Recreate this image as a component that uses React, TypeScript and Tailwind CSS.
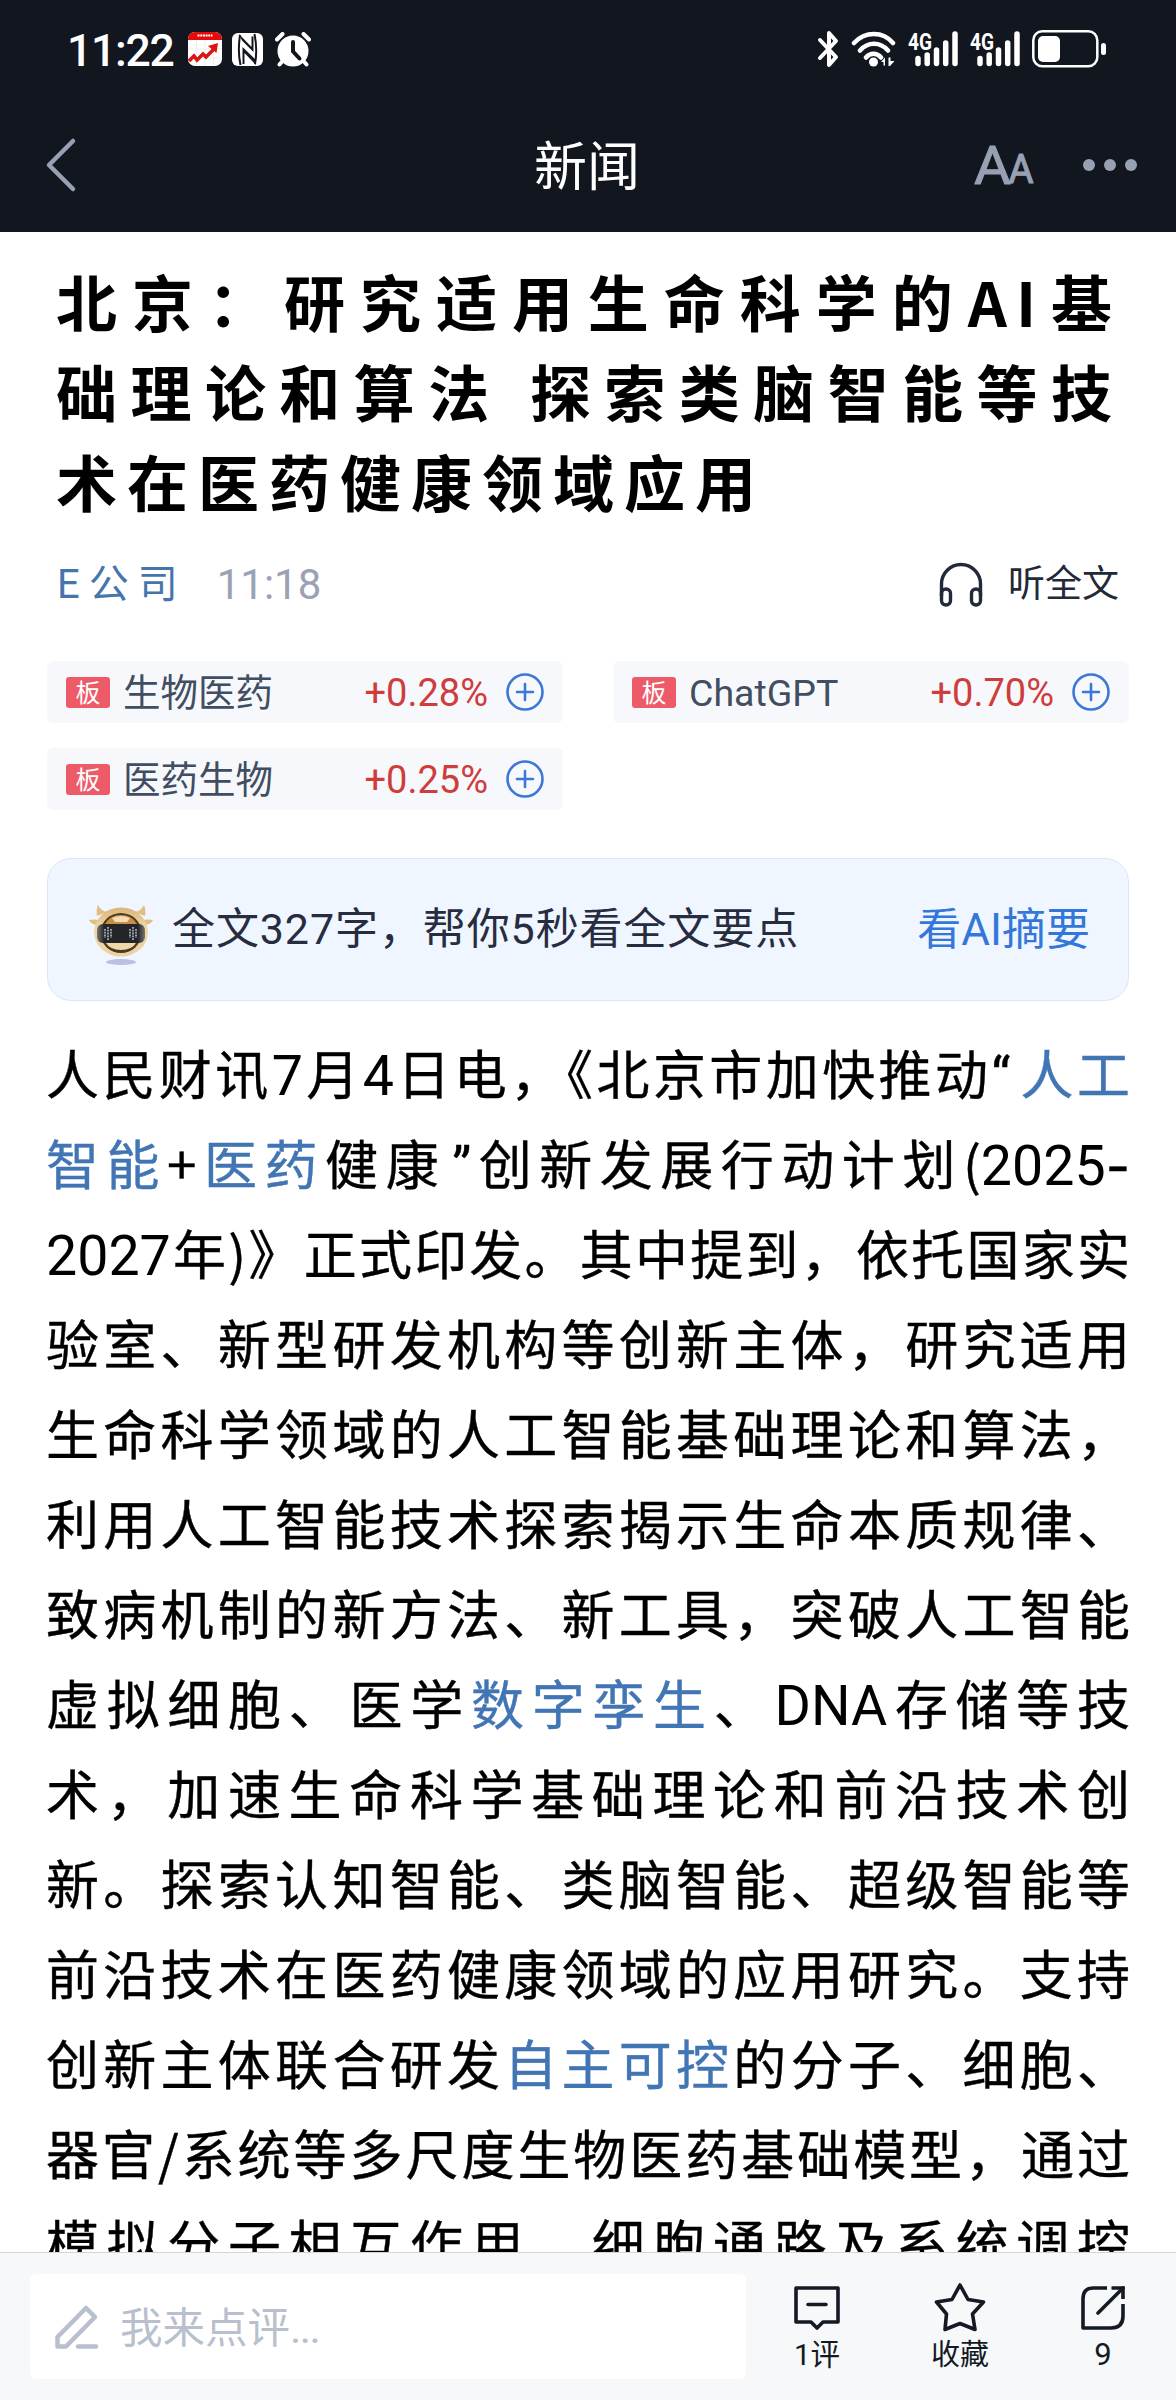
import React from "react";

interface Segment {
  text: string;
  kind?: "link" | "open" | "close" | "dash";
}

interface Stock {
  name: string;
  change: string;
}

const stocks: Stock[] = [
  { name: "生物医药", change: "+0.28%" },
  { name: "ChatGPT", change: "+0.70%" },
  { name: "医药生物", change: "+0.25%" },
];

const titleLines = [
  "北京：研究适用生命科学的AI基",
  "础理论和算法 探索类脑智能等技",
];

const lines: Segment[][] = [
  [
    { text: "人民财讯7月4日电，《北京市加快推动" },
    { text: "“", kind: "open" },
    { text: "人工", kind: "link" },
  ],
  [
    { text: "智能", kind: "link" },
    { text: "+" },
    { text: "医药", kind: "link" },
    { text: "健康" },
    { text: "”", kind: "close" },
    { text: "创新发展行动计划(2025" },
    { text: "-", kind: "dash" },
  ],
  [{ text: "2027年)》正式印发。其中提到，依托国家实" }],
  [{ text: "验室、新型研发机构等创新主体，研究适用" }],
  [{ text: "生命科学领域的人工智能基础理论和算法，" }],
  [{ text: "利用人工智能技术探索揭示生命本质规律、" }],
  [{ text: "致病机制的新方法、新工具，突破人工智能" }],
  [
    { text: "虚拟细胞、医学" },
    { text: "数字孪生", kind: "link" },
    { text: "、DNA存储等技" },
  ],
  [{ text: "术，加速生命科学基础理论和前沿技术创" }],
  [{ text: "新。探索认知智能、类脑智能、超级智能等" }],
  [{ text: "前沿技术在医药健康领域的应用研究。支持" }],
  [
    { text: "创新主体联合研发" },
    { text: "自主可控", kind: "link" },
    { text: "的分子、细胞、" },
  ],
  [{ text: "器官/系统等多尺度生物医药基础模型，通过" }],
  [{ text: "模拟分子相互作用、细胞通路及系统调控" }],
];

const segmentStyles = {
  link: "text-[#4275b3]",
  open: "pr-[7px] font-[Roboto,sans-serif] leading-none",
  close: "pl-[6px] font-[Roboto,sans-serif] leading-none",
  dash: "font-[Inter,sans-serif] leading-none",
};

// Latin runs are set a little larger than the Chinese text around them
function mixed(text: string) {
  return text.split(/([\dA-Za-z]+)/).map((part, i) =>
    i % 2 === 1 ? (
      <span
        key={i}
        className="font-[Roboto,sans-serif] text-[55.500px] leading-none [-webkit-text-stroke:0]"
      >
        {part}
      </span>
    ) : (
      part
    )
  );
}

function AppBadge() {
  return (
    <svg width="34" height="34" viewBox="0 0 34 34" className="ml-[15px]">
      <rect width="34" height="34" rx="7" fill="#fff" />
      <path d="M8.500 8v26M17 8v26M25.500 8v26M0 17h34M0 26h34" stroke="#eee" strokeWidth="1" />
      <path d="M0 8V7a7 7 0 0 1 7-7h20a7 7 0 0 1 7 7v1z" fill="#e60b0b" />
      <path d="M1 29l5-5 3 4 6-6 3 3 9-9" fill="none" stroke="#dc1414" strokeWidth="3.500" />
      <path d="M20 14l10-3-1.500 10z" fill="#dc1414" />
      <path d="M9.500 3.500h15" stroke="#fff" strokeWidth="2" strokeDasharray="2 0.700" />
    </svg>
  );
}

function NfcIcon() {
  return (
    <svg width="31" height="33" viewBox="0 0 31 33" className="ml-[10px]">
      <rect width="31" height="33" rx="6" fill="#fff" />
      <path
        d="M8 2C6.500 12 6.500 23 8.500 32M22.500 1C24.500 11 24.500 23 23 31"
        fill="none"
        stroke="#12161f"
        strokeWidth="2"
      />
      <path d="M7 1l12.500 13V3.500h2V19L10 7.500zM10.500 31V14L24 27v5L12.500 20v11z" fill="#12161f" />
    </svg>
  );
}

function AlarmIcon() {
  return (
    <svg width="36" height="35" viewBox="0 0 36 35" className="ml-[12px]">
      <circle cx="18" cy="19" r="15.500" fill="#fff" />
      <path d="M2 7.500L7.500 2M34 7.500L28.500 2M7.500 29L4.500 32.500M28.500 29l3 3.500" stroke="#fff" strokeWidth="4" strokeLinecap="round" />
      <path d="M18 10v9.500l6.500 7" fill="none" stroke="#12161f" strokeWidth="4" strokeLinecap="round" strokeLinejoin="round" />
    </svg>
  );
}

function Signal() {
  return (
    <svg width="52" height="38" viewBox="0 -2 52 38" className="ml-[10.500px] overflow-visible">
      <text x="0" y="17.500" fontSize="23" fontWeight="700" fill="#fff" fontFamily="Roboto" textLength="24" lengthAdjust="spacingAndGlyphs">
        4G
      </text>
      <path d="M10 26.500v5M19.200 23V31.500M28.500 18V31.500M37.700 11V31.500M47 2V31.500" stroke="#fff" strokeWidth="5.500" strokeLinecap="round" />
    </svg>
  );
}

function StatusBar() {
  return (
    <div className="flex h-[98px] items-center pl-[67px] text-white">
      <span className="w-[106px] pt-[4px] text-[44.500px] leading-none font-medium tracking-[-1.300px] whitespace-nowrap">
        11:22
      </span>
      <AppBadge />
      <NfcIcon />
      <AlarmIcon />
      <svg width="24" height="38" viewBox="0 0 24 38" className="ml-[506px]">
        <path d="M3 10l16 17-7 8V3l7 8L3 28" fill="none" stroke="#fff" strokeWidth="4" strokeLinejoin="round" strokeLinecap="round" />
      </svg>
      <svg width="46" height="38" viewBox="0 0 46 38" className="ml-[10px]">
        <path d="M3 13c11-12 29-12 39 0M9 20.500c8-9 20-9 28 0M15 27.500c4-5 11-5 15 0" fill="none" stroke="#fff" strokeWidth="4.500" strokeLinecap="round" />
        <circle cx="22.500" cy="32" r="4.500" fill="#fff" />
        <path d="M30 32l4-4.500v8h-1.500V32zM37.500 27.500h2V31h4l-4.500 5h-1.500z" fill="#fff" />
      </svg>
      <Signal />
      <Signal />
      <svg width="76" height="38" viewBox="0 0 76 38" className="ml-[9.500px]">
        <rect x="1.300" y="1.300" width="64" height="35" rx="9" fill="none" stroke="#fff" strokeWidth="2.500" />
        <rect x="6" y="6" width="22" height="26" rx="5" fill="#fff" />
        <rect x="69" y="13" width="5" height="12" rx="2.500" fill="#fff" />
      </svg>
    </div>
  );
}

function NavBar() {
  return (
    <div className="flex h-[134px] items-center pr-[39px] pl-[44px]">
      <svg width="34" height="56" viewBox="0 0 34 56">
        <path d="M29 4L5 28l24 24" fill="none" stroke="#98a0b3" strokeWidth="4.500" strokeLinecap="round" strokeLinejoin="round" />
      </svg>
      <h1 className="ml-[456px] pt-[7px] text-[53px] leading-none text-white">新闻</h1>
      <svg width="64" height="64" viewBox="0 -8 64 64" className="ml-[334px] overflow-visible text-[#98a0b3]" fill="currentColor" stroke="currentColor" strokeLinejoin="round">
        <text x="0" y="42.500" fontSize="54" fontFamily="Roboto" strokeWidth="1" textLength="37" lengthAdjust="spacingAndGlyphs">
          A
        </text>
        <text x="34.500" y="41.500" fontSize="41" fontFamily="Roboto" strokeWidth="1.200" textLength="25" lengthAdjust="spacingAndGlyphs">
          A
        </text>
      </svg>
      <div className="ml-auto flex gap-[9px]">
        <span className="size-[12px] rounded-full bg-[#98a0b3]" />
        <span className="size-[12px] rounded-full bg-[#98a0b3]" />
        <span className="size-[12px] rounded-full bg-[#98a0b3]" />
      </div>
    </div>
  );
}

function StockChip({ name, change }: Stock) {
  return (
    <div className="flex h-[62px] items-center rounded-[6px] bg-[#f7f8fc] pr-[19px] pl-[19px]">
      <span className="flex h-[31px] w-[44px] items-center justify-center rounded-[3px] bg-[#ed5b69] pt-[2px] text-[25px] leading-none text-white">
        板
      </span>
      <span className="ml-[13px] pt-[1px] text-[37.500px] leading-[58px] text-[#414d61]">{name}</span>
      <span className="ml-auto pt-[1px] text-[38px] leading-[58px] text-[#cf3c3c]">{change}</span>
      <svg width="38" height="38" viewBox="0 0 38 38" className="ml-[18px]" fill="none" stroke="#3b77d8" strokeWidth="2.600">
        <circle cx="19" cy="19" r="17.500" />
        <path d="M11 19h16M19 11v16" strokeLinecap="round" />
      </svg>
    </div>
  );
}

function Robot() {
  return (
    <svg width="66" height="72" viewBox="0 -5 66 72">
      <defs>
        <linearGradient id="gold" x1="0" y1="0" x2="0" y2="1">
          <stop offset="0" stopColor="#d9b578" />
          <stop offset="0.400" stopColor="#f0d7a8" />
          <stop offset="1" stopColor="#ecd2a2" />
        </linearGradient>
        <linearGradient id="visor" x1="0" y1="0" x2="1" y2="0">
          <stop offset="0" stopColor="#77766f" />
          <stop offset="0.150" stopColor="#232529" />
          <stop offset="0.850" stopColor="#232529" />
          <stop offset="1" stopColor="#77766f" />
        </linearGradient>
      </defs>
      <ellipse cx="33" cy="63" rx="15" ry="3" fill="#b9c0e4" />
      <path d="M9 17Q8 10 10 6q3 6 9 7zM57 17q1-7-1-11-3 6-9 7zM8 26Q3 25 1 21q5-1 10 0zM58 26q5-1 7-5-5-1-10 0z" fill="#e2bd7f" />
      <ellipse cx="33" cy="33" rx="27" ry="24.500" fill="url(#gold)" />
      <ellipse cx="33" cy="34" rx="20.500" ry="20" fill="#4a3a20" />
      <path d="M17 25q5-9 16-9t16 9z" fill="#c98f45" />
      <path d="M24 19q9-4 18 0l-3 4H27z" fill="#f2dcb4" />
      <path d="M18 44h30q-4 7-15 7t-15-7z" fill="#f0d8ab" />
      <rect x="9" y="25" width="48" height="19" rx="6" fill="url(#visor)" />
      <path d="M17 30v9M20 28v13M23 30v9M42 30v9M45 28v13M48 30v9" stroke="#a9afb8" strokeWidth="1.800" strokeDasharray="1.800 1" />
    </svg>
  );
}

function BottomBar() {
  return (
    <footer className="flex h-[148px] items-start border-t border-[#d3d5da] bg-[#f7f8fa] pt-[21px] pl-[30px]">
      <div className="flex h-[105px] w-[716px] items-center rounded-[6px] bg-white pl-[24px] text-[#b8bfcd]">
        <svg width="46" height="46" viewBox="0 0 46 46" fill="none" stroke="currentColor" strokeWidth="4.500" strokeLinejoin="round" strokeLinecap="round">
          <path d="M3.500 33L32 4l9 9-29 29.500H3.500z" />
          <path d="M24 42.500h18" />
        </svg>
        <span className="ml-[20px] pt-[4px] text-[42.500px] leading-[60px]">
          我来点评<span className="tracking-[-1.500px]">...</span>
        </span>
      </div>
      <div className="ml-[21px] flex w-[100px] flex-col items-center pt-[9px] text-[#131a24]">
        <svg width="50" height="50" viewBox="0 0 50 50" fill="none" stroke="currentColor" strokeWidth="3.600" strokeLinejoin="round" strokeLinecap="round">
          <path d="M4 5h42v34H31l-6 6-6-6H4zM16 21.500h18" />
        </svg>
        <span className="mt-[4px] text-[29.500px] leading-[36px]">1评</span>
      </div>
      <div className="ml-[43px] flex w-[100px] flex-col items-center pt-[7px] text-[#131a24]">
        <svg width="54" height="52" viewBox="0 0 54 52" fill="none" stroke="currentColor" strokeWidth="3.600" strokeLinejoin="round">
          <path d="M27 4l8 14.500 15.500 2.500-11 12 2.500 15.500-15-6-15 6 1.500-15.500L3.500 21 19 18.500z" />
        </svg>
        <span className="mt-[4px] text-[29px] leading-[36px]">收藏</span>
      </div>
      <div className="ml-[43px] flex w-[100px] flex-col items-center pt-[9px] text-[#131a24]">
        <svg width="50" height="50" viewBox="0 0 50 50" fill="none" stroke="currentColor" strokeWidth="3.600">
          <path d="M29 5H15Q5 5 5 16v29h28q12 0 12-12V21" strokeLinejoin="round" />
          <path d="M33.500 5H45v11" />
          <path d="M45 5L20 30" strokeLinecap="round" />
        </svg>
        <span className="mt-[4px] text-[31px] leading-[36px]">9</span>
      </div>
    </footer>
  );
}

export default function App() {
  return (
    <div
      lang="zh-CN"
      className="flex h-[2400px] w-[1176px] flex-col overflow-hidden bg-white font-[Roboto,'Noto_Sans_CJK_SC',sans-serif] text-black"
    >
      <header className="h-[232px] shrink-0 bg-[#12161f]">
        <StatusBar />
        <NavBar />
      </header>

      <main className="min-h-0 flex-1 overflow-hidden">
        {/* Title */}
        <h2 className="mt-[24px] ml-[56px] w-[1065px] font-['Noto_Sans_CJK_SC',sans-serif] text-[61px] leading-[90px] font-bold tracking-[9px] whitespace-nowrap">
          {titleLines.map((line) => (
            <span key={line} className="block [text-align-last:justify]">
              {line}
            </span>
          ))}
          <span className="block tracking-[10px]">术在医药健康领域应用</span>
        </h2>

        {/* Source and listen */}
        <div className="mt-[27px] flex h-[60px] items-center pt-[3px] pr-[57px] pl-[57px]">
          <span className="text-[40px] tracking-[9px] text-[#4674ad]">E公司</span>
          <span className="ml-[30px] text-[42px] text-[#9aa3b4]">11:18</span>
          <svg width="46" height="46" viewBox="0 0 46 46" className="ml-auto" fill="none" stroke="#222938" strokeWidth="3.400">
            <path d="M3.500 34V22a19.500 19.500 0 0 1 39 0v12" />
            <rect x="3.500" y="27" width="9" height="16" rx="4.500" />
            <rect x="33.500" y="27" width="9" height="16" rx="4.500" />
          </svg>
          <span className="ml-[24px] text-[37px] text-[#222938]">听全文</span>
        </div>

        {/* Related sectors */}
        <div className="mt-[48px] grid grid-cols-[516px_516px] gap-x-[50px] gap-y-[25px] pl-[47px]">
          {stocks.map((stock) => (
            <StockChip key={stock.name} {...stock} />
          ))}
        </div>

        {/* AI summary */}
        <div className="mx-[47px] mt-[48px] flex h-[143px] items-center rounded-[24px] border border-[#dbe7f6] bg-[#eff6ff] pr-[38px] pl-[40px]">
          <Robot />
          <span className="ml-[18px] text-[43px] tracking-[0.900px] text-[#272d3f]">
            全文327字，帮你5秒看全文要点
          </span>
          <span className="ml-auto text-[44px] text-[#3477da]">看AI摘要</span>
        </div>

        {/* Article */}
        <article className="mx-[46px] mt-[26px] font-['Noto_Sans_CJK_SC',sans-serif] text-[53px] leading-[90px] whitespace-nowrap [-webkit-text-stroke:0.400px]">
          {lines.map((segments, i) => (
            <p key={i} className="h-[90px] [text-align-last:justify]">
              {segments.map((s, j) => (
                <span key={j} className={s.kind && segmentStyles[s.kind]}>
                  {mixed(s.text)}
                </span>
              ))}
            </p>
          ))}
        </article>
      </main>

      <BottomBar />
    </div>
  );
}
